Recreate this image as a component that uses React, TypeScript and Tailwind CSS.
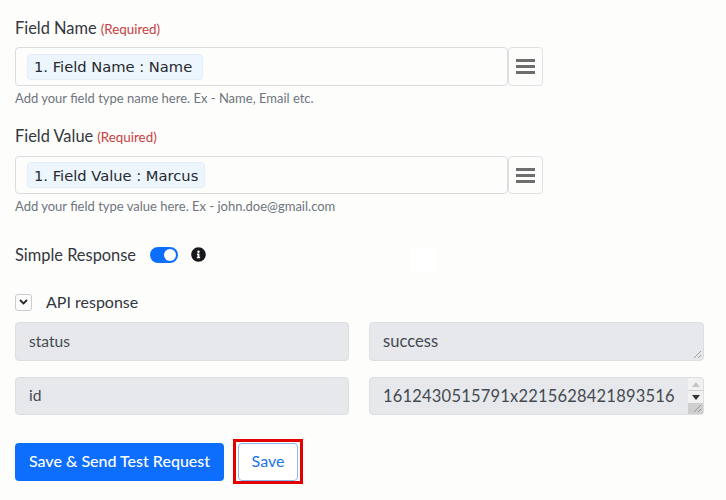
import { FaInfoCircle } from "react-icons/fa";

function Grip() {
  return (
    <svg className="absolute right-[1px] bottom-[1px]" width="10" height="10" viewBox="0 0 10 10">
      <path d="M9 2 L2 9 M9 6 L6 9" stroke="#8a8a8a" strokeWidth="0.8" fill="none" />
    </svg>
  );
}

function MenuButton() {
  return (
    <button className="w-[35px] h-full flex flex-col items-center justify-center gap-[3px] border border-[#dfe1e4] rounded-[4px]">
      <span className="block w-[19px] h-[3px] bg-[#6e6e6e]" />
      <span className="block w-[19px] h-[3px] bg-[#6e6e6e]" />
      <span className="block w-[19px] h-[3px] bg-[#6e6e6e]" />
    </button>
  );
}

function TokenField({
  label,
  token,
  hint,
  height,
  chipWidth,
  labelGap,
}: {
  label: string;
  token: string;
  hint: string;
  height: string;
  chipWidth: string;
  labelGap: string;
}) {
  return (
    <div>
      <div className="flex items-baseline gap-[4px] h-[20px] text-[16.4px] leading-[20px] text-[#33373d]">
        {label}
        <span className="text-[13.4px] text-[#c9403f]">(Required)</span>
      </div>
      <div className={`${labelGap} flex w-[528px] ${height}`}>
        <div className="flex-1 flex items-center pl-[11px] border border-[#dadce0] rounded-[4px]">
          <span
            className={`${chipWidth} h-[26px] flex items-center pl-[6px] pt-[2px] bg-[#edf5fd] border border-[#e3eef9] rounded-[4px] text-[14.7px] font-['DejaVu_Sans',sans-serif] text-[#26292d] whitespace-nowrap`}
          >
            {token}
          </span>
        </div>
        <MenuButton />
      </div>
      <p className="mt-[4px] h-[16px] text-[13px] leading-[16px] text-[#6f757c]">{hint}</p>
    </div>
  );
}

function ResponseRow({ name, children }: { name: string; children: React.ReactNode }) {
  return (
    <div className="grid grid-cols-[334px_335px] gap-x-[20px] h-[38px] text-[15.6px] text-[#454a50]">
      <div className="flex items-center pl-[13px] bg-[#e6e8ec] border border-[#dcdee2] rounded-[4px]">{name}</div>
      {children}
    </div>
  );
}

export default function App() {
  return (
    <div className="relative w-[726px] h-[500px] overflow-hidden bg-[#fdfdfc] px-[15px] pt-[18px] font-['Lato',sans-serif]">
      <TokenField
        label="Field Name"
        token="1. Field Name : Name"
        hint="Add your field type name here. Ex - Name, Email etc."
        height="h-[39px]"
        chipWidth="w-[176px]"
        labelGap="mt-[9px]"
      />
      <div className="mt-[20px]">
        <TokenField
          label="Field Value"
          token="1. Field Value : Marcus"
          hint="Add your field type value here. Ex - john.doe@gmail.com"
          height="h-[38px]"
          chipWidth="w-[178px]"
          labelGap="mt-[10px]"
        />
      </div>

      <div className="mt-[31px] flex items-center h-[20px] text-[16.4px] text-[#33373d]">
        Simple Response
        <span className="ml-[14px] flex items-center justify-end w-[28px] h-[16px] rounded-full bg-[#0d6efd] pr-[2px]">
          <span className="block w-[12px] h-[12px] rounded-full bg-white" />
        </span>
        <FaInfoCircle size={15} className="ml-[13px] -mt-[2px] text-[#16181b]" />
      </div>

      <div className="mt-[27px] flex items-center h-[20px] text-[16px] text-[#33373d]">
        <span className="w-[17px] h-[17px] flex items-center justify-center border border-[#c9ccd0] rounded-[3px]">
          <svg width="9" height="6" viewBox="0 0 9 6">
            <path d="M1 1 L4.5 4.5 L8 1" stroke="#26292d" strokeWidth="1.8" fill="none" />
          </svg>
        </span>
        <span className="ml-[14px]">API response</span>
      </div>

      <div className="mt-[10px] flex flex-col gap-[17px]">
        <ResponseRow name="status">
          <div className="relative flex items-center pl-[13px] h-[39px] bg-[#e6e8ec] border border-[#dcdee2] rounded-[4px] text-[16.6px]">
            success
            <Grip />
          </div>
        </ResponseRow>
        <ResponseRow name="id">
          <div className="relative flex items-center pl-[13px] bg-[#e6e8ec] border border-[#dcdee2] rounded-[4px] tracking-[0.2px] text-[16.5px]">
            1612430515791x2215628421893516
            <div className="absolute right-0 top-0 bottom-0 w-[15px] flex flex-col items-center bg-[#f1f1f1] rounded-r-[4px]">
              <div className="h-[12px] flex items-center">
                <span className="border-x-[4px] border-x-transparent border-b-[5px] border-b-[#c4c4c4]" />
              </div>
              <div className="w-full h-[1px] bg-[#d0d0d0]" />
              <div className="h-[12px] flex items-center">
                <span className="border-x-[4px] border-x-transparent border-t-[5px] border-t-[#333]" />
              </div>
              <div className="flex-1 w-full bg-[#cfcfcf]" />
            </div>
            <Grip />
          </div>
        </ResponseRow>
      </div>

      <div className="mt-[28px] flex items-start">
        <button className="w-[209px] h-[38px] pb-[2px] bg-[#0d6efd] rounded-[4px] text-white text-[16px] font-medium">
          Save &amp; Send Test Request
        </button>
        <div className="ml-[9px] -mt-[4px] border-[3px] border-[#e30000] pt-[1px] px-[2px]">
          <button className="block w-[60px] h-[38px] pb-[2px] bg-white border border-[#8ab8ef] rounded-[4px] text-[#1a73e8] text-[16px]">
            Save
          </button>
        </div>
      </div>

      <div className="absolute left-[410px] top-[248px] w-[25px] h-[24px] bg-white" />
    </div>
  );
}
